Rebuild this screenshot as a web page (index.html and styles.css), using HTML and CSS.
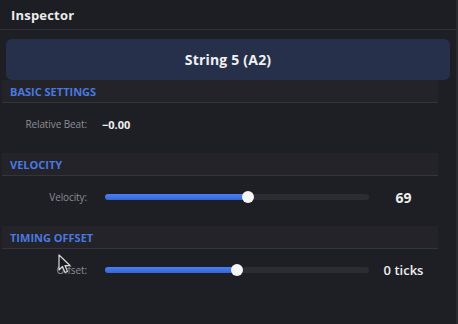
FILE: index.html
```html
<!DOCTYPE html>
<html>
<head>
<meta charset="utf-8">
<link rel="stylesheet" href="styles.css">
</head>
<body>
<div class="panel">
  <div class="titlebar"><span class="title">Inspector</span></div>
  <div class="card">String 5 (A2)</div>

  <div class="section">
    <div class="sec-head">BASIC SETTINGS</div>
    <div class="sec-body">
      <div class="row">
        <div class="label">Relative Beat:</div>
        <div class="plain-value">−0.00</div>
      </div>
    </div>
  </div>

  <div class="section">
    <div class="sec-head">VELOCITY</div>
    <div class="sec-body">
      <div class="row">
        <div class="label">Velocity:</div>
        <div class="slider"><div class="track"><div class="fill" style="width:54.3%"><span class="thumb"></span></div></div></div>
        <div class="value value-lg">69</div>
      </div>
    </div>
  </div>

  <div class="section">
    <div class="sec-head">TIMING OFFSET</div>
    <div class="sec-body">
      <div class="row">
        <div class="label">Offset:</div>
        <div class="slider"><div class="track"><div class="fill" style="width:50%"><span class="thumb"></span></div></div></div>
        <div class="value">0 ticks</div>
      </div>
    </div>
  </div>

  <svg class="cursor" width="14" height="20" viewBox="0 0 14 20">
    <path d="M1 1 L1 16 L4.5 12.5 L7 18.5 L9.5 17.5 L7 11.5 L12 11.5 Z" fill="#1a1b20" stroke="#d8d8d8" stroke-width="1.2" stroke-linejoin="round"/>
  </svg>
</div>
</body>
</html>
```

FILE: styles.css
```css
html, body {
  margin: 0;
  padding: 0;
  background: #1e1f25;
}
body {
  font-family: "Open Sans", "Noto Sans", "Liberation Sans", sans-serif;
  width: 458px;
  height: 324px;
  overflow: hidden;
}
.panel {
  position: relative;
  width: 456px;
  height: 324px;
  border-right: 2px solid #2a2b31;
  background: #1e1f25;
}
.titlebar {
  height: 29px;
  border-bottom: 1px solid #2f3037;
  display: flex;
  align-items: center;
  padding-left: 11px;
  background: #1d1e23;
}
.title {
  color: #ececec;
  font-weight: 700;
  font-size: 13px;
  letter-spacing: 0.2px;
}
.card {
  margin: 9px 0 0 6px;
  width: 444px;
  height: 41px;
  border-radius: 6px;
  background: #26304a;
  color: #f0f0f2;
  font-weight: 700;
  font-size: 14px;
  letter-spacing: 0.2px;
  display: flex;
  align-items: center;
  justify-content: center;
}
.section {
  width: 436px;
  margin-left: 2px;
}
.sec-head {
  height: 22px;
  border-bottom: 1px solid #34353b;
  background: #232329;
  color: #4a79e0;
  font-weight: 700;
  font-size: 11px;
  display: flex;
  align-items: center;
  padding-left: 8px;
}
.sec-body {
  height: 50px;
  padding-top: 12px;
  box-sizing: border-box;
}
.row {
  display: flex;
  align-items: center;
  height: 18px;
}
.label {
  width: 85px;
  text-align: right;
  color: #8c8d93;
  font-size: 10px;
  letter-spacing: -0.1px;
  flex: none;
}
.plain-value {
  margin-left: 15px;
  color: #eeeeee;
  font-weight: 700;
  font-size: 11px;
}
.slider {
  margin-left: 18px;
  width: 264px;
  flex: none;
}
.track {
  height: 6px;
  border-radius: 3px;
  background: #2c2d33;
  position: relative;
}
.fill {
  height: 6px;
  border-radius: 3px;
  background: linear-gradient(#4b80f0, #3466d8);
  position: relative;
}
.thumb {
  position: absolute;
  right: -6px;
  top: -3px;
  width: 12px;
  height: 12px;
  border-radius: 50%;
  background: #f6f6f6;
}
.value {
  width: 70px;
  text-align: center;
  color: #ededed;
  font-weight: 600;
  font-size: 13px;
}
.value-lg {
  font-size: 14px;
  font-weight: 700;
}
.cursor {
  position: absolute;
  left: 58px;
  top: 254px;
}
```
